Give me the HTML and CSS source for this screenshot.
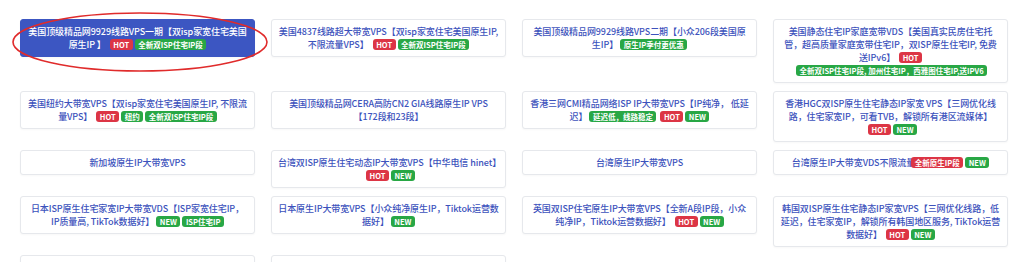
FILE: index.html
```html
<!DOCTYPE html>
<html lang="zh-CN">
<head>
<meta charset="utf-8">
<title>VPS</title>
<link rel="stylesheet" href="styles.css">
</head>
<body>
<div class="page">
  <div class="grid">
    <div class="card active">美国顶级精品网9929线路VPS一期【双isp家宽住宅美国原生IP 】<span class="b hot">HOT</span><span class="b ok">全新双ISP住宅IP段</span></div>
    <div class="card">美国4837线路超大带宽VPS【双isp家宽住宅美国原生IP,不限流量VPS】<span class="b hot">HOT</span><span class="b ok">全新双ISP住宅IP段</span></div>
    <div class="card">美国顶级精品网9929线路VPS二期【小众206段美国原生IP】<span class="b ok">原生IP季付更优惠</span></div>
    <div class="card">美国静态住宅IP家庭宽带VDS【美国真实民房住宅托管，超高质量家庭宽带住宅IP，双ISP原生住宅IP, 免费送IPv6】<span class="b hot">HOT</span><span class="b ok">全新双ISP住宅IP段, 加州住宅IP，西雅图住宅IP,送IPV6</span></div>

    <div class="card">美国纽约大带宽VPS【双isp家宽住宅美国原生IP, 不限流量VPS】<span class="b hot">HOT</span><span class="b ok">纽约</span><span class="b ok">全新双ISP住宅IP段</span></div>
    <div class="card">美国顶级精品网CERA高防CN2 GIA线路原生IP VPS【172段和23段】</div>
    <div class="card">香港三网CMI精品网络ISP IP大带宽VPS【IP纯净， 低延迟】<span class="b ok">延迟低，线路稳定</span><span class="b hot">HOT</span><span class="b ok">NEW</span></div>
    <div class="card">香港HGC双ISP原生住宅静态IP家宽 VPS【三网优化线路，住宅家宽IP，可看TVB，解锁所有港区流媒体】<span class="b hot">HOT</span><span class="b ok">NEW</span></div>

    <div class="card">新加坡原生IP大带宽VPS</div>
    <div class="card">台湾双ISP原生住宅动态IP大带宽VPS【中华电信 hinet】<span class="b hot">HOT</span><span class="b ok">NEW</span></div>
    <div class="card">台湾原生IP大带宽VPS</div>
    <div class="card nowrap">台湾原生IP大带宽VDS不限流量<span class="b hot over">全新原生IP段</span><span class="b ok">NEW</span></div>

    <div class="card">日本ISP原生住宅家宽IP大带宽VDS【ISP家宽住宅IP，IP质量高, TikTok数据好】<span class="b ok">NEW</span><span class="b ok">ISP住宅IP</span></div>
    <div class="card">日本原生IP大带宽VPS【小众纯净原生IP，Tiktok运营数据好】<span class="b ok">NEW</span></div>
    <div class="card">英国双ISP住宅原生IP大带宽VPS【全新A段IP段，小众纯净IP，Tiktok运营数据好】<span class="b hot">HOT</span><span class="b ok">NEW</span></div>
    <div class="card">韩国双ISP原生住宅静态IP家宽VPS【三网优化线路，低延迟，住宅家宽IP，解锁所有韩国地区服务, TikTok运营数据好】<span class="b hot">HOT</span><span class="b ok">NEW</span></div>

    <div class="card">泰国原生IP大带宽VPS<span class="b ok">原生IP段</span></div>
    <div class="card">印尼原生IP大带宽VPS【小众纯净IP段】</div>
  </div>
  <svg class="ring" width="258" height="62" viewBox="0 0 258 62" aria-hidden="true">
    <ellipse cx="129" cy="31" rx="127" ry="29" fill="none" stroke="#e02b2b" stroke-width="1.6"/>
  </svg>
</div>
</body>
</html>
```
FILE: styles.css
```css
html, body {
  margin: 0;
  padding: 0;
  background: #ffffff;
}
body {
  font-family: "Noto Sans CJK SC", "Open Sans", sans-serif;
  font-size: 9px;
  line-height: 13px;
}
.page {
  position: relative;
  padding: 19px 17px 0 20px;
}
.grid {
  display: grid;
  grid-template-columns: repeat(4, 235px);
  column-gap: 16px;
  row-gap: 8px;
  align-items: start;
}
.card {
  background: #ffffff;
  border: 1px solid #e6e8ec;
  border-radius: 3px;
  box-shadow: 0 1px 2px rgba(0, 0, 0, 0.03);
  padding: 5px 6px;
  text-align: center;
  color: #3c52bc;
  font-weight: 500;
  letter-spacing: -0.08px;
}
.card.active {
  background: #3c56c2;
  border-color: #3c56c2;
  color: #ffffff;
}
.card.nowrap {
  white-space: nowrap;
}
.b {
  display: inline-block;
  font-size: 7.5px;
  line-height: 11px;
  height: 11px;
  padding: 0 3.5px;
  border-radius: 3px;
  color: #ffffff;
  font-weight: 700;
  margin-left: 2px;
  vertical-align: 0;
  white-space: nowrap;
  letter-spacing: 0;
}
.b.hot {
  background: #dc3545;
  margin-left: 4px;
}
.b.ok {
  background: #28a745;
}
.b.hot + .b.ok {
  margin-left: 2px;
}
.b.over {
  margin-left: -4px;
}
.ring {
  position: absolute;
  left: 11px;
  top: 11px;
}
```
